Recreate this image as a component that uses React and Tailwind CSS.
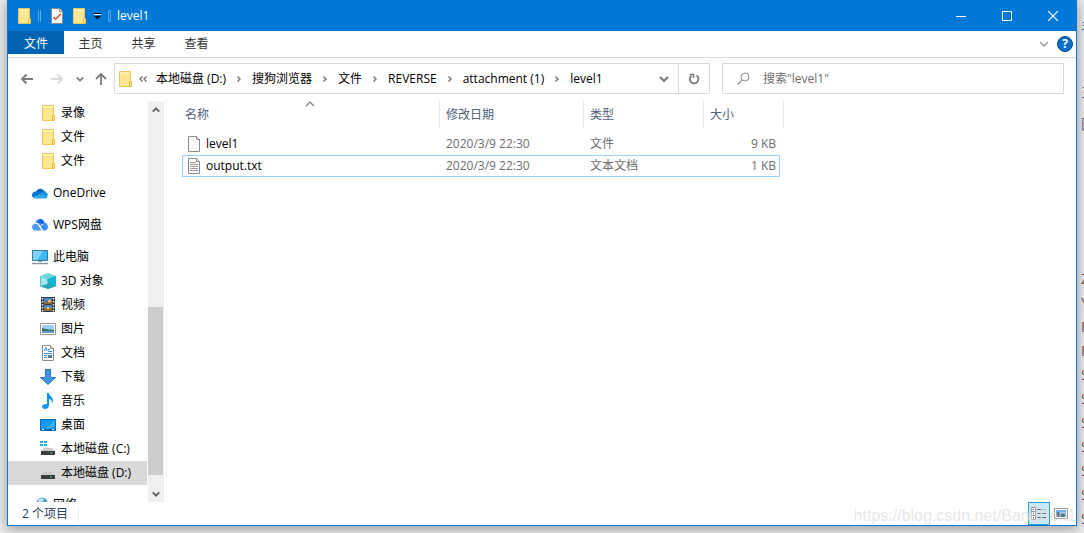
import React, { useState } from 'react';

const FolderIcon = () => (
    <svg width="16" height="16" viewBox="0 0 16 16" className="shrink-0">
        <path d="M2.500.5h11v15h-11z" fill="#ffe693" stroke="#ebc85c" />
        <path d="M3 1h10v2H3z" fill="#ffeeb2" />
        <path d="M12.500 15.500v-5h2v5z" fill="#ffe693" stroke="#e6bd45" />
    </svg>
);

const OneDriveIcon = () => (
    <svg width="16" height="16" viewBox="0 0 16 16" className="shrink-0">
        <path d="M4 7a4.600 4.600 0 0 1 8.500-.8L9 10z" fill="#0364b8" />
        <path d="M3.500 6.500C1.500 6.500 0 8 0 10c0 1 .4 1.900 1 2.500L9 9 6 7.200a4 4 0 0 0-2.500-.7z" fill="#0078d4" />
        <path d="M8 9.500l3.500-3.400c1.300-.3 2.300.4 2.700 1.700C15.400 8.200 16 9 16 10.200l-3 1.300z" fill="#1490df" />
        <path d="M1 12.500l7.500-3.700c.8-.4 1.500-.2 2.200.2l5.200 2.700A3 3 0 0 1 13 13.500H3.500c-1 0-1.900-.4-2.500-1z" fill="#28a8ea" />
    </svg>
);

const WpsIcon = () => (
    <svg width="16" height="16" viewBox="0 0 16 16" className="shrink-0">
        <path d="M3.500 6A4.500 4.500 0 0 1 8 2c2.300 0 4 1.500 4.300 3.500C14.500 6 16 7.800 16 10c0 2-1.500 3.500-3.500 3.500H11L7.500 8C6.500 6.500 5 6 3.500 6z" fill="#3b8cf8" />
        <path d="M8 2c2.300 0 4 1.500 4.300 3.500L10 7.500 6 5z" fill="#1a62e0" />
        <path d="M0 10c0-2 1.500-3.300 3.300-3.300 1.400 0 2.300.6 3 1.600L9.500 13.500H3.500C1.500 13.500 0 12 0 10z" fill="#4b9bfa" />
        <path d="M4 6.300c1.500 0 2.600.7 3.400 2l3 5.200M8.500 9l2.500-2" stroke="#fff" fill="none" />
    </svg>
);

const PcIcon = () => (
    <svg width="16" height="16" viewBox="0 0 16 16" className="shrink-0">
        <path d="M.5 1.500h15v10H.5z" fill="#3db8fb" stroke="#377a9f" />
        <path d="M1 2h10L5 11H1z" fill="#7fd3ff" />
        <path d="M6 12h4v1H6z" fill="#8fa7b7" />
        <path d="M0 14.500h16" stroke="#8599a8" strokeWidth="1.500" />
    </svg>
);

const CubeIcon = () => (
    <svg width="16" height="16" viewBox="0 0 16 16" className="shrink-0">
        <path d="M0 3l8-3 8 3-8 3z" fill="#6fd5de" />
        <path d="M0 3l8 3v10l-8-3z" fill="#4fc6d3" />
        <path d="M8 6l8-3v10l-8 3z" fill="#0fa0b8" />
        <path d="M1 4l6 2.500v5L1 13z" fill="#a6e6ea" />
        <path d="M0 13l8-2 8 2-8 3z" fill="#27a5b5" />
        <path d="M8 6l8-3v10l-8-2z" fill="#12b4cf" />
    </svg>
);

const VideoIcon = () => (
    <svg width="16" height="16" viewBox="0 0 16 16" className="shrink-0">
        <path d="M1 0h14v15H1z" fill="#3a3a3a" />
        <path d="M2.500 1v14M13.500 1v14" stroke="#f0f0f0" strokeWidth="1.500" strokeDasharray="1.500 1.500" />
        <path d="M4 1h8v6H4zM4 8h8v6H4z" fill="#4b84d4" />
        <path d="M4 5l3-1 2 1 3-2v4H4zM4 12l4-2 4 2v2H4z" fill="#8a6a3c" />
        <circle cx="9.500" cy="4" r="1.500" fill="#f6c445" />
        <circle cx="8" cy="11" r="1.500" fill="#efb93c" />
    </svg>
);

const PictureIcon = () => (
    <svg width="16" height="16" viewBox="0 0 16 16" className="shrink-0">
        <path d="M.5 2.500h15v11H.5z" fill="#fff" stroke="#9a9a9a" />
        <path d="M2 4h12v8H2z" fill="#9fcff6" />
        <path d="M2 7l4 1 8 1v1H2z" fill="#3e7668" />
        <path d="M2 10h12v2H2z" fill="#5b9fc6" />
    </svg>
);

const DocumentIcon = () => (
    <svg width="16" height="16" viewBox="0 0 16 16" className="shrink-0">
        <path d="M2.500.5h8l3 3v12h-11z" fill="#fff" stroke="#8d8d8d" />
        <path d="M10.500.5v3h3" fill="#e8e8e8" stroke="#8d8d8d" />
        <path d="M4 6l2-3.500L7 6M8 4.500h2M8 6.500h4M4 8.500h8M4 10.500h3M4 12.500h3" stroke="#2e8fdc" fill="none" />
        <path d="M8 10h4v3H8z" fill="#4f7f9f" />
    </svg>
);

const DownloadIcon = () => (
    <svg width="16" height="16" viewBox="0 0 16 16" className="shrink-0">
        <path d="M5.500.5h5v8h5L8 15.500.5 8.500h5z" fill="#3f95e5" stroke="#2877bf" />
    </svg>
);

const MusicIcon = () => (
    <svg width="16" height="16" viewBox="0 0 16 16" className="shrink-0">
        <path d="M7 0h2c.3 3 4.500 4 4 8-.1 1-.5 1.700-1.200 2.500.5-2.500-.5-4-2.800-4.500v6.500C9 14.500 7 16 4.800 16 3 16 2 15 2 13.800c0-1.700 2-3.300 5-2.800z" fill="#1296e8" />
    </svg>
);

const DesktopIcon = () => (
    <svg width="16" height="16" viewBox="0 0 16 16" className="shrink-0">
        <path d="M.5 2.500h15v11H.5z" fill="#1199f5" stroke="#0a6dbb" />
        <path d="M15 3v6l-6 3H5z" fill="#37b1fb" />
        <path d="M1 12.500h14" stroke="#0a5c9e" />
        <path d="M2 12.500h2M12 12.500h2" stroke="#d7efff" />
    </svg>
);

const DriveIcon = ({ system }) => (
    <svg width="16" height="16" viewBox="0 0 16 16" className="shrink-0">
        {system && <path d="M0 0h3v2H0zM4 0h3v2H4zM0 3h3v2H0zM4 3h3v2H4z" fill="#16b5e9" />}
        <path d="M4 7h8l3 3H1z" fill="#cbcbcb" />
        <path d="M1 10h14v4H1z" fill="#3c3c3c" />
        <path d="M10 12h2" stroke="#3be35c" />
    </svg>
);

const NetworkIcon = () => (
    <svg width="16" height="16" viewBox="0 0 16 16" className="shrink-0">
        <circle cx="10" cy="6" r="5.500" fill="#4f9fd0" />
        <path d="M6 3c2-2 5-2 6-1l-2 3-3 2z" fill="#c3e3f2" />
        <path d="M1 10h9v5H1z" fill="#3db8fb" stroke="#377a9f" />
    </svg>
);

const FileIcon = ({ lines }) => (
    <svg width="16" height="16" viewBox="0 0 16 16" className="shrink-0">
        <path d="M2.500.5h8l3 3v12h-11z" fill="#fafafa" stroke="#8d8d8d" />
        <path d="M10.500.5v3h3" fill="#e6e6e6" stroke="#8d8d8d" />
        {lines && <path d="M4 4.500h6M4 6.500h8M4 8.500h8M4 10.500h8M4 12.500h8" stroke="#9b9b9b" />}
    </svg>
);

const PropertiesIcon = () => (
    <svg width="16" height="16" viewBox="0 0 16 16">
        <path d="M2.500.5h8l3 3v12h-11z" fill="#fafafa" stroke="#8d8d8d" />
        <path d="M10.500.5v3h3" fill="#e6e6e6" stroke="#8d8d8d" />
        <path d="M4.500 9l2.200 2.200 5-5.200" fill="none" stroke="#e0562b" strokeWidth="1.600" />
    </svg>
);

const Chevron = ({ d, size = 10, width = 2, className = 'text-[#7a7a7a]' }) => (
    <svg width={size} height={size} viewBox="0 0 10 10" className={`shrink-0 ${className}`}>
        <path d={d} fill="none" stroke="currentColor" strokeWidth={width} />
    </svg>
);

const DOWN = 'M1 3l4 4 4-4';
const UP = 'M1 7l4-4 4 4';
const RIGHT = 'M3.500 2.500l2.500 2.500-2.500 2.500';

const treeGroups = [
    [
        { id: 'rec', label: '录像', icon: <FolderIcon />, child: true },
        { id: 'f1', label: '文件', icon: <FolderIcon />, child: true },
        { id: 'f2', label: '文件', icon: <FolderIcon />, child: true },
    ],
    [{ id: 'onedrive', label: 'OneDrive', icon: <OneDriveIcon /> }],
    [{ id: 'wps', label: 'WPS网盘', icon: <WpsIcon /> }],
    [
        { id: 'pc', label: '此电脑', icon: <PcIcon /> },
        { id: '3d', label: '3D 对象', icon: <CubeIcon />, child: true },
        { id: 'video', label: '视频', icon: <VideoIcon />, child: true },
        { id: 'pic', label: '图片', icon: <PictureIcon />, child: true },
        { id: 'doc', label: '文档', icon: <DocumentIcon />, child: true },
        { id: 'down', label: '下载', icon: <DownloadIcon />, child: true },
        { id: 'music', label: '音乐', icon: <MusicIcon />, child: true },
        { id: 'desktop', label: '桌面', icon: <DesktopIcon />, child: true },
        { id: 'c', label: '本地磁盘 (C:)', icon: <DriveIcon system />, child: true },
        { id: 'd', label: '本地磁盘 (D:)', icon: <DriveIcon />, child: true },
    ],
    [{ id: 'net', label: '网络', icon: <NetworkIcon /> }],
];

const crumbs = ['本地磁盘 (D:)', '搜狗浏览器', '文件', 'REVERSE', 'attachment (1)', 'level1'];

const files = [
    { name: 'level1', date: '2020/3/9 22:30', type: '文件', size: '9 KB' },
    { name: 'output.txt', date: '2020/3/9 22:30', type: '文本文档', size: '1 KB', lines: true },
];

function TitleBar() {
    return (
        <header className="flex h-[31px] shrink-0 items-center bg-[#0078d7] text-white">
            <div className="flex flex-1 items-center pl-2">
                <FolderIcon />
                <span className="ml-1.5 h-3 w-[3px] border-x border-[#5aa7e6]"></span>
                <button className="ml-2" aria-label="属性"><PropertiesIcon /></button>
                <button className="ml-1.5" aria-label="新建文件夹"><FolderIcon /></button>
                <button className="ml-1.5" aria-label="自定义快速访问工具栏">
                    <svg width="9" height="8" viewBox="0 0 9 8">
                        <path d="M1 1.500h7" stroke="#111" />
                        <path d="M1 2.500h7" stroke="#fff" />
                        <path d="M1 4h7L4.500 7.500z" fill="#111" />
                    </svg>
                </button>
                <span className="ml-1.5 h-3 w-[3px] border-x border-[#5aa7e6]"></span>
                <h1 className="ml-1.5">level1</h1>
            </div>
            <button className="flex h-full w-[46px] items-center justify-center" aria-label="最小化">
                <svg width="10" height="10"><path d="M0 5.500h10" stroke="#fff" /></svg>
            </button>
            <button className="flex h-full w-[46px] items-center justify-center" aria-label="最大化">
                <svg width="10" height="10"><path d="M.5.5h9v9h-9z" stroke="#fff" fill="none" /></svg>
            </button>
            <button className="flex h-full w-[46px] items-center justify-center" aria-label="关闭">
                <svg width="10" height="10"><path d="M0 0l10 10M10 0L0 10" stroke="#fff" strokeWidth="1.200" /></svg>
            </button>
        </header>
    );
}

function RibbonTabs() {
    return (
        <div className="flex h-[27px] shrink-0 items-start border-b border-[#dadbdc] text-[#333]">
            <button className="h-[23px] w-14 bg-[#0063b1] pt-0.5 text-white">文件</button>
            <button className="h-[25px] w-[53px]">主页</button>
            <button className="h-[25px] w-[53px]">共享</button>
            <button className="h-[25px] w-[53px]">查看</button>
            <div className="ml-auto flex h-[26px] items-center gap-2 pr-[3px]">
                <button aria-label="展开功能区"><Chevron d={DOWN} width={1.5} className="text-[#9a9a9a]" /></button>
                <button className="flex size-4 items-center justify-center rounded-full border border-[#0a4a86] bg-[#0b6fc9] font-bold text-white" aria-label="帮助">?</button>
            </div>
        </div>
    );
}

function AddressRow() {
    const [query, setQuery] = useState('');

    return (
        <div className="flex shrink-0 items-center pt-[5px] pr-3 pb-[7px]">
            <div className="flex w-[106px] shrink-0 items-center pl-3">
                <button aria-label="后退">
                    <svg width="14" height="12" viewBox="0 0 14 12"><path d="M13 6H2M6.500 1.500L2 6l4.500 4.500" fill="none" stroke="#7a7a7a" strokeWidth="1.800" /></svg>
                </button>
                <button className="ml-4" aria-label="前进">
                    <svg width="14" height="12" viewBox="0 0 14 12"><path d="M1 6h11M7.500 1.500L12 6l-4.500 4.500" fill="none" stroke="#dadada" strokeWidth="1.800" /></svg>
                </button>
                <button className="ml-3" aria-label="最近浏览的位置"><Chevron d={DOWN} size={8} /></button>
                <button className="ml-2.5" aria-label="上移">
                    <svg width="14" height="14" viewBox="0 0 14 14"><path d="M7 13V2M2 7l5-5 5 5" fill="none" stroke="#7a7a7a" strokeWidth="1.800" /></svg>
                </button>
            </div>
            <div className="flex h-[31px] min-w-0 flex-1 items-center border border-[#d9d9d9]">
                <span className="ml-0.5"><FolderIcon /></span>
                <span className="ml-[5px] mr-2 flex w-[10px]">
                    <svg width="10" height="8" viewBox="0 0 10 8"><path d="M4.500 1.500L2 4l2.500 2.500M8.500 1.500L6 4l2.500 2.500" fill="none" stroke="#666" strokeWidth="1.200" /></svg>
                </span>
                <nav className="flex flex-1 items-center whitespace-nowrap text-black">
                    {crumbs.map((crumb, index) => (
                        <React.Fragment key={crumb}>
                            {index > 0 && (
                                <span className="flex w-[26px] justify-center"><Chevron d={RIGHT} width={1.5} /></span>
                            )}
                            <button>{crumb}</button>
                        </React.Fragment>
                    ))}
                </nav>
                <button className="flex w-[28px] justify-center" aria-label="以前的位置"><Chevron d={DOWN} /></button>
                <button className="flex h-full w-[31px] items-center justify-center border-l border-[#d9d9d9]" aria-label="刷新">
                    <svg width="12" height="12" viewBox="0 0 12 12">
                        <path d="M8.500 2.500A4.300 4.300 0 1 1 3.500 2.700" fill="none" stroke="#7a7a7a" strokeWidth="1.800" />
                        <path d="M1.500 1.500h4V5" fill="none" stroke="#7a7a7a" strokeWidth="1.500" />
                    </svg>
                </button>
            </div>
            <label className="ml-3 flex h-[31px] w-[342px] items-center border border-[#d9d9d9] pl-3.5">
                <svg width="13" height="13" viewBox="0 0 13 13">
                    <circle cx="8" cy="5" r="4" fill="none" stroke="#8a8a8a" />
                    <path d="M5.200 7.800L.5 12.500" stroke="#8a8a8a" strokeWidth="1.200" />
                </svg>
                <input
                    className="ml-[13px] min-w-0 flex-1 outline-none placeholder:text-[#6d6d6d]"
                    aria-label="搜索"
                    placeholder={'搜索"level1"'}
                    value={query}
                    onChange={e => setQuery(e.target.value)}
                />
            </label>
        </div>
    );
}

function Sidebar() {
    const [selected, setSelected] = useState('d');

    return (
        <aside className="flex w-[159px] shrink-0 border-r border-[#f5f5f5]">
            <nav className="flex w-[140px] flex-col gap-2 overflow-hidden pr-px text-black">
                {treeGroups.map(group => (
                    <div key={group[0].id} className="shrink-0">
                        {group.map(item => (
                            <button
                                key={item.id}
                                onClick={() => setSelected(item.id)}
                                className={`flex h-6 w-full items-center gap-[5px] whitespace-nowrap ${item.child ? 'pl-8' : 'pl-6'} ${selected === item.id ? 'bg-[#d9d9d9]' : ''}`}
                            >
                                {item.icon}
                                {item.label}
                            </button>
                        ))}
                    </div>
                ))}
            </nav>
            <div className="flex w-4 flex-col bg-[#f0f0f0]">
                <button className="flex h-[17px] items-center justify-center" aria-label="向上滚动"><Chevron d={UP} size={8} width={2.5} className="text-[#606060]" /></button>
                <div className="grow-[189]"></div>
                <div className="mr-px grow-[168] bg-[#cdcdcd]"></div>
                <div className="grow-[10]"></div>
                <button className="flex h-[17px] items-center justify-center" aria-label="向下滚动"><Chevron d={DOWN} size={8} width={2.5} className="text-[#606060]" /></button>
            </div>
        </aside>
    );
}

function FileList() {
    const [active, setActive] = useState('output.txt');

    return (
        <main className="min-w-0 flex-1 pl-[15px]">
            <table className="table-fixed border-separate border-spacing-0 text-left text-[#6d6d6d]">
                <thead>
                    <tr className="h-[27px] text-[#4c607a]">
                        <th className="relative w-[258px] border-r border-[#e5e5e5] p-0 pl-[3px] font-normal">
                            名称
                            <span className="absolute -top-0.5 left-1/2 -ml-1.5"><Chevron d={UP} width={1.2} /></span>
                        </th>
                        <th className="w-[144px] border-r border-[#e5e5e5] p-0 pl-1.5 font-normal">修改日期</th>
                        <th className="w-[120px] border-r border-[#e5e5e5] p-0 pl-1.5 font-normal">类型</th>
                        <th className="w-[80px] border-r border-[#e5e5e5] p-0 pl-1.5 font-normal">大小</th>
                    </tr>
                </thead>
                <tbody>
                    <tr className="h-[5px]"></tr>
                    {files.map(file => {
                        const line = active === file.name ? 'border-[#99d1ff]' : 'border-transparent';
                        return (
                            <tr key={file.name} onClick={() => setActive(file.name)}>
                                <td className="p-0">
                                    <div className={`flex h-[22px] items-center gap-1 border-y border-l pl-[3px] text-black ${line}`}>
                                        <FileIcon lines={file.lines} />
                                        {file.name}
                                    </div>
                                </td>
                                <td className="p-0">
                                    <div className={`flex h-[22px] items-center border-y pl-1.5 ${line}`}>{file.date}</div>
                                </td>
                                <td className="p-0">
                                    <div className={`flex h-[22px] items-center border-y pl-1.5 ${line}`}>{file.type}</div>
                                </td>
                                <td className="p-0">
                                    <div className={`mr-1 flex h-[22px] items-center justify-end border-y border-r pr-[3px] ${line}`}>{file.size}</div>
                                </td>
                            </tr>
                        );
                    })}
                </tbody>
            </table>
        </main>
    );
}

function StatusBar() {
    return (
        <footer className="relative flex h-[23px] shrink-0 items-center pr-2 pl-3.5 text-[#2a3f5f]">
            <span className="border-r border-[#ededed] pr-2.5">2 个项目</span>
            <button className="ml-auto flex h-[23px] w-[22px] items-center justify-center border border-[#26a0da] bg-[#cbe8f6]" aria-label="详细信息">
                <svg width="16" height="13" viewBox="0 0 16 13">
                    <path d="M.5.5h4v12h-4zM.5 4.500h4M.5 8.500h4" fill="#fff" stroke="#9b9b9b" />
                    <path d="M2 2.500h1M2 6.500h1M2 10.500h1" stroke="#b0413e" />
                    <path d="M6 2.500h10M6 6.500h10M6 10.500h10" stroke="#6d6d6d" strokeDasharray="4 1" />
                </svg>
            </button>
            <button className="ml-[3px] flex h-full w-[15px] items-center justify-center" aria-label="大图标">
                <svg width="14" height="11" viewBox="0 0 14 11">
                    <path d="M.5.5h13v10H.5z" fill="#fff" stroke="#999" />
                    <path d="M2 2h10v7H2z" fill="#74aef0" />
                    <path d="M2 5l3-1 3 2 4-1v4H2z" fill="#47708a" />
                </svg>
            </button>
            <span className="pointer-events-none absolute top-0.5 right-0 font-['Liberation_Sans',sans-serif] text-base text-[#ddd]/70">https://blog.csdn.net/BangSen1</span>
        </footer>
    );
}

function PageBehind() {
    return (
        <div className="flex w-[7px] shrink-0 flex-col overflow-hidden pl-1 text-sm leading-6 whitespace-nowrap text-[#66668c]">
            <span className="mt-4">手</span>
            <span className="mt-10 h-8">三</span>
            <span>图</span>
            <div className="mt-[131px] text-[#7d5a5a]">
                {['Z', 'Y', 'F', 'F', 'S', 'S', 'S', 'S', 'S', 'S', 'S'].map((letter, index) => (
                    <div key={index}>{letter}</div>
                ))}
            </div>
        </div>
    );
}

export default function App() {
    return (
        <div className="flex h-screen overflow-hidden bg-[#ececec] font-['Open_Sans','Noto_Sans_CJK_SC',sans-serif] text-xs">
            <div className="relative mb-[7px] ml-[7px] flex min-w-0 flex-1 flex-col border border-t-0 border-[#0078d7] bg-white shadow-[0_2px_12px_rgba(0,0,0,0.4)]">
                <TitleBar />
                <RibbonTabs />
                <AddressRow />
                <div className="flex min-h-0 flex-1">
                    <Sidebar />
                    <FileList />
                </div>
                <StatusBar />
            </div>
            <PageBehind />
        </div>
    );
}
